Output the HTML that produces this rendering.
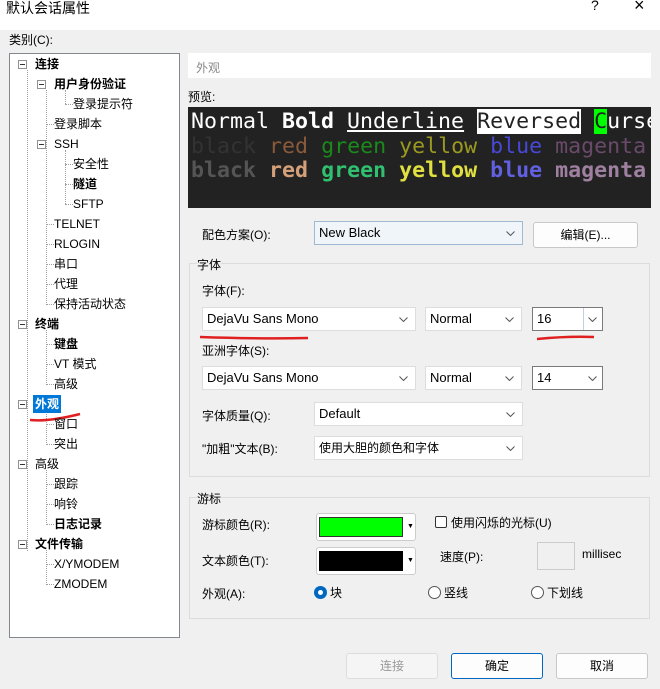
<!DOCTYPE html>
<html><head><meta charset="utf-8"><style>
*{box-sizing:border-box;margin:0;padding:0}
body{width:660px;height:689px;background:#f0f0f0;font-family:"Liberation Sans","Noto Sans CJK SC",sans-serif;font-size:12px;color:#000;position:relative;overflow:hidden}
.a{position:absolute;white-space:nowrap}
.title{left:0;top:0;width:660px;height:30px;background:#fff}
.tree{left:9px;top:53px;width:171px;height:585px;background:#fff;border:1px solid #828790}
.ti{position:absolute;font-size:12px;line-height:16px}
.b{font-weight:bold}
.box{position:absolute;width:9px;height:9px;border:1px solid #919191;background:#fff}
.box:after{content:"";position:absolute;left:1px;top:3px;width:5px;height:1px;background:#333}
.vl{position:absolute;border-left:1px dotted #a0a0a0}
.hl{position:absolute;border-top:1px dotted #a0a0a0;width:8px}
.sel{position:absolute;border:1px solid #ddd;background:#fff;height:24px;font-size:13px;line-height:22px;padding-left:4px}
.sel svg{position:absolute;right:7px;top:9px}
.btn{position:absolute;border:1px solid #c8c8c8;background:#fdfdfd;border-radius:3px;height:26px;text-align:center;line-height:24px;font-size:12px}
.fs{position:absolute;border:1px solid #dcdcdc}
.leg{position:absolute;background:#f0f0f0;font-size:12px}
.pv{left:188px;top:107px;width:463px;height:101px;background:#222;font-family:"DejaVu Sans Mono",monospace;font-size:21.6px;line-height:24.5px;padding:3px 0 0 3px;overflow:hidden}
.pv div{white-space:pre}
</style></head><body>
<div class="a title"></div>
<div class="a" style="left:6px;top:-2px;font-size:14px">默认会话属性</div>
<div class="a" style="left:591px;top:-3px;font-size:14px">?</div>
<div class="a" style="left:634px;top:-5px;font-size:18px">×</div>
<div class="a" style="left:9px;top:31px">类别(C):</div>

<div class="a tree">
<div class="vl" style="left:17px;top:16px;height:481px"></div>
<div class="vl" style="left:36px;top:36px;height:215px"></div>
<div class="vl" style="left:55px;top:36px;height:14px"></div>
<div class="vl" style="left:55px;top:96px;height:54px"></div>
<div class="vl" style="left:36px;top:276px;height:55px"></div>
<div class="vl" style="left:36px;top:356px;height:35px"></div>
<div class="vl" style="left:36px;top:416px;height:55px"></div>
<div class="vl" style="left:36px;top:496px;height:35px"></div>
</div>

<div class="box" style="left:18px;top:60px"></div><div class="ti b" style="left:35px;top:56px">连接</div>
<div class="box" style="left:37px;top:80px"></div><div class="ti b" style="left:54px;top:76px">用户身份验证</div>
<div class="hl" style="left:65px;top:104px"></div><div class="ti" style="left:73px;top:96px">登录提示符</div>
<div class="hl" style="left:46px;top:124px"></div><div class="ti" style="left:54px;top:116px">登录脚本</div>
<div class="box" style="left:37px;top:140px"></div><div class="ti" style="left:54px;top:136px">SSH</div>
<div class="hl" style="left:65px;top:164px"></div><div class="ti" style="left:73px;top:156px">安全性</div>
<div class="hl" style="left:65px;top:184px"></div><div class="ti b" style="left:73px;top:176px">隧道</div>
<div class="hl" style="left:65px;top:204px"></div><div class="ti" style="left:73px;top:196px">SFTP</div>
<div class="hl" style="left:46px;top:224px"></div><div class="ti" style="left:54px;top:216px">TELNET</div>
<div class="hl" style="left:46px;top:244px"></div><div class="ti" style="left:54px;top:236px">RLOGIN</div>
<div class="hl" style="left:46px;top:264px"></div><div class="ti" style="left:54px;top:256px">串口</div>
<div class="hl" style="left:46px;top:284px"></div><div class="ti" style="left:54px;top:276px">代理</div>
<div class="hl" style="left:46px;top:304px"></div><div class="ti" style="left:54px;top:296px">保持活动状态</div>
<div class="box" style="left:18px;top:320px"></div><div class="ti b" style="left:35px;top:316px">终端</div>
<div class="hl" style="left:46px;top:344px"></div><div class="ti b" style="left:54px;top:336px">键盘</div>
<div class="hl" style="left:46px;top:364px"></div><div class="ti" style="left:54px;top:356px">VT 模式</div>
<div class="hl" style="left:46px;top:384px"></div><div class="ti" style="left:54px;top:376px">高级</div>
<div class="box" style="left:18px;top:400px"></div><div class="ti b" style="left:33px;top:395px;background:#0078d7;color:#fff;padding:0 2px;height:18px;line-height:18px">外观</div>
<svg class="a" style="left:28px;top:410px" width="55" height="14"><path d="M2 10 Q20 12 52 4" stroke="#e02020" stroke-width="2.5" fill="none"/></svg>
<div class="hl" style="left:46px;top:424px"></div><div class="ti" style="left:54px;top:416px">窗口</div>
<div class="hl" style="left:46px;top:444px"></div><div class="ti" style="left:54px;top:436px">突出</div>
<div class="box" style="left:18px;top:460px"></div><div class="ti" style="left:35px;top:456px">高级</div>
<div class="hl" style="left:46px;top:484px"></div><div class="ti" style="left:54px;top:476px">跟踪</div>
<div class="hl" style="left:46px;top:504px"></div><div class="ti" style="left:54px;top:496px">响铃</div>
<div class="hl" style="left:46px;top:524px"></div><div class="ti b" style="left:54px;top:516px">日志记录</div>
<div class="box" style="left:18px;top:540px"></div><div class="ti b" style="left:35px;top:536px">文件传输</div>
<div class="hl" style="left:46px;top:564px"></div><div class="ti" style="left:54px;top:556px">X/YMODEM</div>
<div class="hl" style="left:46px;top:584px"></div><div class="ti" style="left:54px;top:576px">ZMODEM</div>

<div class="a" style="left:188px;top:53px;width:463px;height:25px;background:#fff;color:#888;padding:6px 0 0 8px">外观</div>
<div class="a" style="left:188px;top:88px">预览:</div>
<div class="a pv">
<div style="color:#fff">Normal <b>Bold</b> <u>Underline</u> <span style="background:#fff;color:#222">Reversed</span> <span style="background:#0f0;color:#222">C</span>urse</div>
<div><span style="color:#333">black</span> <span style="color:#8a5a3a">red</span> <span style="color:#1a8a1a">green</span> <span style="color:#9a9a20">yellow</span> <span style="color:#4848d8">blue</span> <span style="color:#6a4a6a">magenta</span></div>
<div style="font-weight:bold"><span style="color:#555">black</span> <span style="color:#d4a07a">red</span> <span style="color:#30c070">green</span> <span style="color:#e0e040">yellow</span> <span style="color:#6060e0">blue</span> <span style="color:#a080a0">magenta</span></div>
</div>

<div class="a" style="left:202px;top:226px">配色方案(O):</div>
<div class="sel" style="left:314px;top:221px;width:209px;background:#f0f5fa;border-color:#a0b8d0">New Black<svg width="9" height="5"><path d="M0.5 0.5L4.5 4.5L8.5 0.5" stroke="#555" fill="none"/></svg></div>
<div class="btn" style="left:533px;top:222px;width:105px">编辑(E)...</div>

<div class="fs" style="left:189px;top:263px;width:461px;height:214px"></div>
<div class="leg" style="left:197px;top:256px">字体</div>
<div class="a" style="left:202px;top:282px">字体(F):</div>
<div class="sel" style="left:202px;top:307px;width:214px">DejaVu Sans Mono<svg width="9" height="5"><path d="M0.5 0.5L4.5 4.5L8.5 0.5" stroke="#555" fill="none"/></svg></div>
<div class="sel" style="left:425px;top:307px;width:97px">Normal<svg width="9" height="5"><path d="M0.5 0.5L4.5 4.5L8.5 0.5" stroke="#555" fill="none"/></svg></div>
<div class="sel" style="left:532px;top:307px;width:71px;border-color:#7a7a7a">16<span style="position:absolute;left:50px;top:0;width:1px;height:22px;background:#c0d0e0"></span><svg width="9" height="5" style="right:5px"><path d="M0.5 0.5L4.5 4.5L8.5 0.5" stroke="#555" fill="none"/></svg></div>
<svg class="a" style="left:198px;top:334px" width="420" height="8"><path d="M2 3 Q60 5 110 4" stroke="#e02020" stroke-width="2.5" fill="none"/><path d="M339 5 Q370 2 396 3" stroke="#e02020" stroke-width="2.5" fill="none"/></svg>
<div class="a" style="left:202px;top:342px">亚洲字体(S):</div>
<div class="sel" style="left:202px;top:366px;width:214px">DejaVu Sans Mono<svg width="9" height="5"><path d="M0.5 0.5L4.5 4.5L8.5 0.5" stroke="#555" fill="none"/></svg></div>
<div class="sel" style="left:425px;top:366px;width:97px">Normal<svg width="9" height="5"><path d="M0.5 0.5L4.5 4.5L8.5 0.5" stroke="#555" fill="none"/></svg></div>
<div class="sel" style="left:532px;top:366px;width:71px;border-color:#7a7a7a">14<svg width="9" height="5" style="right:5px"><path d="M0.5 0.5L4.5 4.5L8.5 0.5" stroke="#555" fill="none"/></svg></div>
<div class="a" style="left:202px;top:407px">字体质量(Q):</div>
<div class="sel" style="left:314px;top:402px;width:209px">Default<svg width="9" height="5"><path d="M0.5 0.5L4.5 4.5L8.5 0.5" stroke="#555" fill="none"/></svg></div>
<div class="a" style="left:202px;top:440px">"加粗"文本(B):</div>
<div class="sel" style="left:314px;top:436px;width:209px;font-size:12px">使用大胆的颜色和字体<svg width="9" height="5"><path d="M0.5 0.5L4.5 4.5L8.5 0.5" stroke="#555" fill="none"/></svg></div>

<div class="fs" style="left:189px;top:497px;width:461px;height:122px"></div>
<div class="leg" style="left:197px;top:490px">游标</div>
<div class="a" style="left:202px;top:516px">游标颜色(R):</div>
<div class="a" style="left:316px;top:513px;width:100px;height:28px;border:1px solid #ccc;border-radius:3px;background:#fff"><div class="a" style="left:2px;top:3px;width:84px;height:20px;background:#0f0;border:1px solid #333"></div><div class="a" style="left:90px;top:9px;font-size:7px">▼</div></div>
<div class="a" style="left:202px;top:552px">文本颜色(T):</div>
<div class="a" style="left:316px;top:547px;width:100px;height:28px;border:1px solid #ccc;border-radius:3px;background:#fff"><div class="a" style="left:2px;top:3px;width:84px;height:20px;background:#000"></div><div class="a" style="left:90px;top:9px;font-size:7px">▼</div></div>
<div class="a" style="left:435px;top:516px;width:12px;height:12px;border:1px solid #333;border-radius:2px;background:#fff"></div>
<div class="a" style="left:451px;top:514px">使用闪烁的光标(U)</div>
<div class="a" style="left:440px;top:548px">速度(P):</div>
<div class="a" style="left:537px;top:542px;width:38px;height:28px;border:1px solid #ccc"></div>
<div class="a" style="left:582px;top:547px">millisec</div>
<div class="a" style="left:202px;top:585px">外观(A):</div>
<div class="a" style="left:314px;top:586px;width:13px;height:13px;border-radius:50%;background:#0067c0"><div class="a" style="left:4px;top:4px;width:5px;height:5px;border-radius:50%;background:#fff"></div></div>
<div class="a" style="left:330px;top:584px">块</div>
<div class="a" style="left:428px;top:586px;width:13px;height:13px;border-radius:50%;border:1px solid #555;background:#fff"></div>
<div class="a" style="left:444px;top:584px">竖线</div>
<div class="a" style="left:531px;top:586px;width:13px;height:13px;border-radius:50%;border:1px solid #555;background:#fff"></div>
<div class="a" style="left:547px;top:584px">下划线</div>

<div class="btn" style="left:346px;top:653px;width:92px;color:#999;background:#f5f5f5;border-color:#ddd">连接</div>
<div class="btn" style="left:451px;top:653px;width:92px;border-color:#0067c0">确定</div>
<div class="btn" style="left:556px;top:653px;width:92px">取消</div>
</body></html>
